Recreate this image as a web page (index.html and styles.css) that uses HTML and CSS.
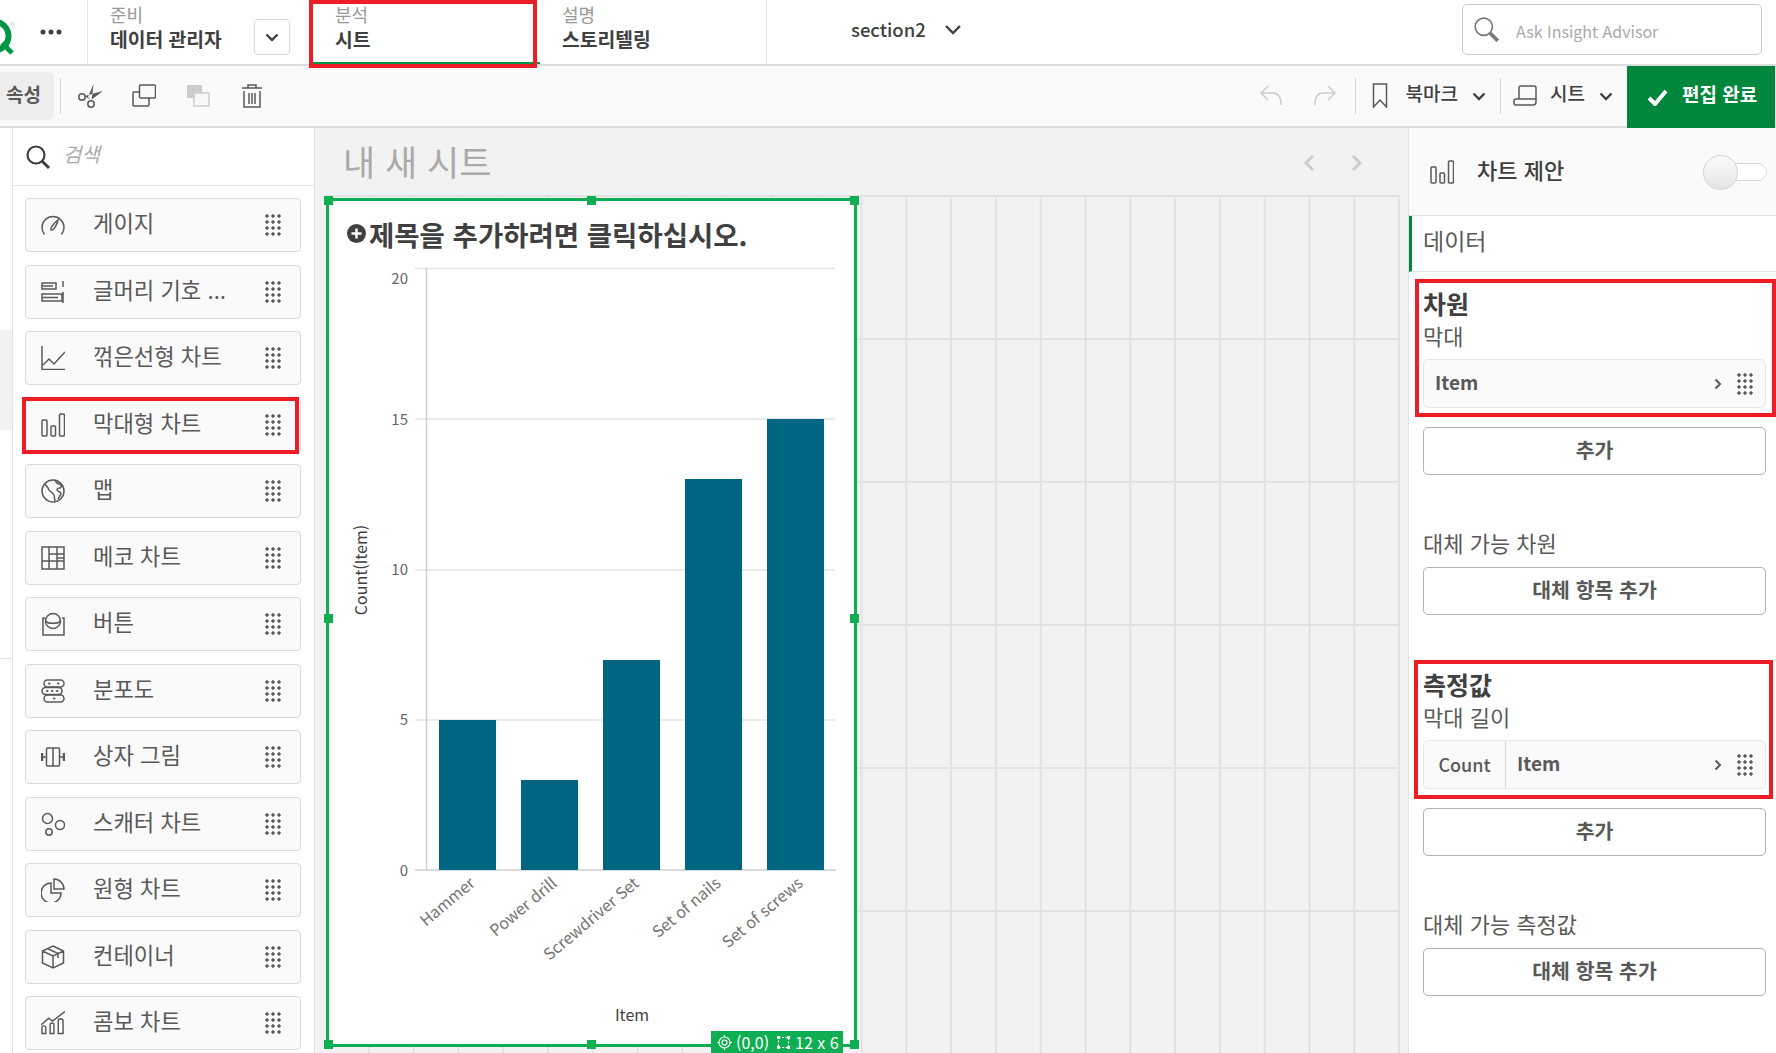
FILE: index.html
```html
<!DOCTYPE html>
<html lang="ko">
<head>
  <meta charset="UTF-8">
  <title>시트 편집</title>
  <link rel="stylesheet" href="styles.css">
</head>
<body>
  <header class="topbar">
    <div class="brand">
      <svg class="logo" width="18" height="50" viewBox="0 0 18 50">
        <circle cx="-6" cy="29" r="14.5" fill="none" stroke="#009845" stroke-width="6"/>
        <path d="M2 36l10 10" stroke="#009845" stroke-width="5" fill="none"/>
        <circle cx="12.500" cy="17" r="1.500" fill="none" stroke="#bbb" stroke-width=".7"/>
      </svg>
      <svg class="more" width="22" height="6" viewBox="0 0 22 6"><circle cx="3" cy="3" r="2.500"/><circle cx="11" cy="3" r="2.500"/><circle cx="19" cy="3" r="2.500"/></svg>
    </div>
    <div class="tab tab-prepare">
      <div><div class="tab-label">준비</div><div class="tab-name">데이터 관리자</div></div>
      <button class="tab-drop"><svg width="14" height="9" viewBox="0 0 14 9"><path d="M1.500 1.500L7 7l5.500-5.500" class="chev"/></svg></button>
    </div>
    <div class="tab tab-analyze">
      <div><div class="tab-label">분석</div><div class="tab-name">시트</div></div>
    </div>
    <div class="tab tab-narrate">
      <div><div class="tab-label">설명</div><div class="tab-name">스토리텔링</div></div>
    </div>
    <div class="section-name">section2 <svg width="18" height="11" viewBox="0 0 18 11"><path d="M2 2l7 7 7-7" class="chev"/></svg></div>
    <div class="insight">
      <svg width="28" height="28" viewBox="0 0 26 26"><circle cx="10" cy="10" r="8" fill="none" stroke="#777" stroke-width="1.500"/><path d="M16 16l7 7" stroke="#777" stroke-width="3.500" fill="none"/></svg>
      <span>Ask Insight Advisor</span>
    </div>
  </header>

  <div class="toolbar">
    <button class="prop-btn">속성</button>
    <span class="tool-div first"></span>
    <div class="tools">
      <svg class="tool" viewBox="0 0 24 24"><circle cx="4" cy="13" r="3.200"/><circle cx="13" cy="20" r="3.200"/><path class="blade" d="M6.500 12L25 7 13 16zM13.500 17L15.500 0 10 13z"/></svg>
      <svg class="tool" viewBox="0 0 24 24"><rect x="7.500" y="1" width="16" height="13" rx="1"/><path d="M7.500 8H2a1 1 0 0 0-1 1v12a1 1 0 0 0 1 1h14a1 1 0 0 0 1-1v-7"/></svg>
      <svg class="tool" viewBox="0 0 24 24"><rect x="1" y="1" width="15" height="13" fill="#ccc" stroke="none"/><rect x="8" y="9" width="15" height="13" fill="#f8f8f8" stroke="#ccc"/></svg>
      <svg class="tool" viewBox="0 0 24 24"><path d="M2 4h20M8 4V1h8v3M4 7v16h16V7M9 9v11M12 9v11M15 9v11"/></svg>
    </div>
    <div class="tools-right">
      <svg class="tool faint" viewBox="0 0 24 24"><path d="M9 2L2 9l7 7M2 9h12c5 0 8 4 8 12"/></svg>
      <svg class="tool faint gap" viewBox="0 0 24 24"><path d="M15 2l7 7-7 7M22 9H10c-5 0-8 4-8 12"/></svg>
      <span class="tool-div"></span>
      <svg class="mark" width="16" height="25" viewBox="0 0 16 25"><path d="M1.500 1h13v23L8 17l-6.500 7z"/></svg>
      <span class="tool-text">북마크</span>
      <svg class="tool-chev" width="14" height="9" viewBox="0 0 14 9"><path d="M1.500 1.500L7 7l5.500-5.500" class="chev"/></svg>
      <span class="tool-div second"></span>
      <svg class="tool sheet-ico" viewBox="0 0 24 24"><path d="M6 16V5a2 2 0 0 1 2-2h13a2 2 0 0 1 2 2v13M3 22a2 2 0 0 1-2-2v-2a2 2 0 0 1 2-2h20v3a3 3 0 0 1-3 3H3z" transform="translate(0 -1)"/></svg>
      <span class="tool-text">시트</span>
      <svg class="tool-chev" width="14" height="9" viewBox="0 0 14 9"><path d="M1.500 1.500L7 7l5.500-5.500" class="chev"/></svg>
    </div>
    <button class="done-btn">
      <svg width="21" height="17" viewBox="0 0 21 17"><path d="M2 9l6 6L19 2" fill="none" stroke="#fff" stroke-width="4"/></svg>
      <span>편집 완료</span>
    </button>
  </div>

  <main class="main">
    <div class="strip"><div class="strip-block"></div><div class="strip-line"></div></div>

    <aside class="assets">
      <div class="asset-search">
        <svg width="26" height="26" viewBox="0 0 26 26"><circle cx="11" cy="11" r="8.500" fill="none" stroke="#404040" stroke-width="2.200"/><path d="M17 17l7 7" stroke="#404040" stroke-width="3" fill="none"/></svg>
        <span>검색</span>
      </div>
      <ul class="asset-list">
        <li class="asset">
          <svg class="ico" viewBox="0 0 24 24"><path d="M3.500 21.500A11 11 0 1 1 20.500 21.500"/><path d="M10 17c-1-2 4-8 7-10-1 4-4 11-7 10z"/></svg>
          <span class="asset-name">게이지</span><span class="grip"></span>
        </li>
        <li class="asset">
          <svg class="ico" viewBox="0 0 24 24"><path d="M1 3h14v6H1zM1 14h20v7H1zM1 6h11M1 17.500h16M22 1v6M22 12v11"/></svg>
          <span class="asset-name">글머리 기호 ...</span><span class="grip"></span>
        </li>
        <li class="asset">
          <svg class="ico" viewBox="0 0 24 24"><path d="M1 0v23.500h24M2 19l6-6 5 5L24 6"/></svg>
          <span class="asset-name">꺾은선형 차트</span><span class="grip"></span>
        </li>
        <li class="asset asset-marked">
          <svg class="ico" viewBox="0 0 24 24"><rect x="1" y="7" width="5" height="16" rx="1"/><rect x="10" y="13" width="4.500" height="10" rx="1"/><rect x="18.500" y="1" width="5" height="22" rx="1"/></svg>
          <span class="asset-name">막대형 차트</span><span class="grip"></span>
        </li>
        <li class="asset">
          <svg class="ico" viewBox="0 0 24 24"><circle cx="12" cy="12" r="11"/><path d="M4 5c2 3 3 3 4 6 1 2 4 2 5 5l1 6M15 1c-1 3 1 3 3 4 3 1 3 3 1 4-2 0-3 0-3 2 1 2 4 1 4 4l-3 5"/></svg>
          <span class="asset-name">맵</span><span class="grip"></span>
        </li>
        <li class="asset">
          <svg class="ico" viewBox="0 0 24 24"><rect x="1" y="1" width="22" height="22"/><path d="M8 1v22M16 1v22M8 8h15M1 15h22M16 12h7"/></svg>
          <span class="asset-name">메코 차트</span><span class="grip"></span>
        </li>
        <li class="asset">
          <svg class="ico" viewBox="0 0 24 24"><path d="M4 6H2v17h21V6h-2"/><circle cx="12" cy="9" r="7.500"/><path d="M4.500 9c2 3 13 3 15 0"/></svg>
          <span class="asset-name">버튼</span><span class="grip"></span>
        </li>
        <li class="asset">
          <svg class="ico" viewBox="0 0 24 24"><rect x="3" y="1" width="20" height="7" rx="3.500"/><rect x="1" y="8.500" width="20" height="7" rx="3.500"/><rect x="3" y="16" width="20" height="7" rx="3.500"/><path class="dotline" d="M8 4.500h.5M17 4.500h.5M6 12h.5M11 12h.5M16 12h.5M13 19.500h.5"/></svg>
          <span class="asset-name">분포도</span><span class="grip"></span>
        </li>
        <li class="asset">
          <svg class="ico" viewBox="0 0 24 24"><rect x="5.500" y="3" width="13" height="18" rx="1"/><path d="M12 3v18M0 12h5.500M18.500 12H24"/><path class="whisker" d="M1 8v8M23 8v8"/></svg>
          <span class="asset-name">상자 그림</span><span class="grip"></span>
        </li>
        <li class="asset">
          <svg class="ico" viewBox="0 0 24 24"><circle cx="6.500" cy="6.500" r="5"/><circle cx="19" cy="13" r="4.500"/><circle cx="8" cy="20" r="3.200"/></svg>
          <span class="asset-name">스캐터 차트</span><span class="grip"></span>
        </li>
        <li class="asset">
          <svg class="ico" viewBox="0 0 24 24"><path d="M10 5A10 10 0 1 0 20 15H10z"/><path d="M13 1a10 10 0 0 1 10 10H13z"/></svg>
          <span class="asset-name">원형 차트</span><span class="grip"></span>
        </li>
        <li class="asset">
          <svg class="ico" viewBox="0 0 24 24"><path d="M12 1l10.500 5v12L12 23 1.500 18V6zM1.500 6L12 11l10.500-5M12 11v12M6.500 3.500L17 8.500V13"/></svg>
          <span class="asset-name">컨테이너</span><span class="grip"></span>
        </li>
        <li class="asset">
          <svg class="ico" viewBox="0 0 25 24"><path d="M1 23v-6a2 2 0 0 1 4 0v6zM9.500 23v-9a2 2 0 0 1 4 0v9zM18 23V10a2.500 2.500 0 0 1 5 0v13zM0 14L8 7l4 3L25 0"/></svg>
          <span class="asset-name">콤보 차트</span><span class="grip"></span>
        </li>
      </ul>
    </aside>

    <section class="canvas">
      <div class="canvas-head">
        <h1 class="sheet-title">내 새 시트</h1>
        <div class="pager">
          <svg width="12" height="18" viewBox="0 0 12 18"><path d="M10 2L3 9l7 7"/></svg>
          <svg width="12" height="18" viewBox="0 0 12 18"><path d="M2 2l7 7-7 7"/></svg>
        </div>
      </div>
      <div class="sheet">
        <div class="card">
          <div class="card-title">
            <svg width="19" height="19" viewBox="0 0 19 19"><circle cx="9.500" cy="9.500" r="9.500" fill="#404040"/><path d="M9.500 4.500v10M4.500 9.500h10" stroke="#fff" stroke-width="2.400"/></svg>
            <span>제목을 추가하려면 클릭하십시오.</span>
          </div>
          <svg class="chart" width="525" height="794" viewBox="329 250 525 794">
            <path class="grid" d="M415 268.500H835M415 419H835M415 570H835M415 720H835"/>
            <path class="axis" d="M426.500 268V870M415 870H836"/>
            <text class="tick" x="408" y="284">20</text>
            <text class="tick" x="408" y="425">15</text>
            <text class="tick" x="408" y="575">10</text>
            <text class="tick" x="408" y="725">5</text>
            <text class="tick" x="408" y="876">0</text>
            <rect class="bar" x="439" y="720" width="57" height="150"/>
            <rect class="bar" x="521" y="780" width="57" height="90"/>
            <rect class="bar" x="603" y="660" width="57" height="210"/>
            <rect class="bar" x="685" y="479" width="57" height="391"/>
            <rect class="bar" x="767" y="419" width="57" height="451"/>
            <text class="cat" transform="translate(476 885) rotate(-40)">Hammer</text>
            <text class="cat" transform="translate(558 885) rotate(-40)">Power drill</text>
            <text class="cat" transform="translate(640 885) rotate(-40)">Screwdriver Set</text>
            <text class="cat" transform="translate(722 885) rotate(-40)">Set of nails</text>
            <text class="cat" transform="translate(804 885) rotate(-40)">Set of screws</text>
            <text class="axis-title" transform="translate(367 570) rotate(-90)">Count(Item)</text>
            <text class="axis-title" x="632" y="1021">Item</text>
          </svg>
          <span class="handle h-tl"></span><span class="handle h-tc"></span><span class="handle h-tr"></span>
          <span class="handle h-ml"></span><span class="handle h-mr"></span>
          <span class="handle h-bl"></span><span class="handle h-bc"></span><span class="handle h-br"></span>
          <div class="badge">
            <svg width="15" height="15" viewBox="0 0 15 15"><circle cx="7.500" cy="7.500" r="5.500"/><circle cx="7.500" cy="7.500" r="2.500"/><path d="M7.500 0v2M7.500 13v2M0 7.500h2M13 7.500h2"/></svg>
            <span>(0,0)</span>
            <svg class="badge-size" width="15" height="15" viewBox="0 0 15 15"><path d="M2.500 2.500h10v10h-10z" stroke-dasharray="2 1.500"/><path class="corners" d="M1 1h3v3H1zM11 1h3v3h-3zM1 11h3v3H1zM11 11h3v3h-3z"/></svg>
            <span>12 x 6</span>
          </div>
        </div>
      </div>
    </section>

    <aside class="props">
      <div class="suggest">
        <svg class="ico" viewBox="0 0 24 24"><rect x="1" y="7" width="5" height="16" rx="1"/><rect x="10" y="13" width="4.500" height="10" rx="1"/><rect x="18.500" y="1" width="5" height="22" rx="1"/></svg>
        <span class="suggest-text">차트 제안</span>
        <span class="toggle"><span class="knob"></span></span>
      </div>
      <div class="data-tab">데이터</div>

      <div class="prop-section first">
        <div class="marked marked-dim">
          <div class="prop-title">차원</div>
          <div class="prop-sub">막대</div>
          <div class="field">
            <span class="field-name">Item</span>
            <svg class="field-chev" width="8" height="12" viewBox="0 0 8 12"><path d="M1.500 1.500L6 6l-4.500 4.500" class="chev"/></svg>
            <span class="grip"></span>
          </div>
        </div>
        <button class="add-btn">추가</button>
        <div class="prop-sub alt">대체 가능 차원</div>
        <button class="add-btn flush">대체 항목 추가</button>
      </div>

      <div class="prop-section">
        <div class="marked">
          <div class="prop-title">측정값</div>
          <div class="prop-sub">막대 길이</div>
          <div class="field">
            <span class="field-agg">Count</span>
            <span class="field-name">Item</span>
            <svg class="field-chev" width="8" height="12" viewBox="0 0 8 12"><path d="M1.500 1.500L6 6l-4.500 4.500" class="chev"/></svg>
            <span class="grip"></span>
          </div>
        </div>
        <button class="add-btn">추가</button>
        <div class="prop-sub alt">대체 가능 측정값</div>
        <button class="add-btn flush">대체 항목 추가</button>
      </div>
    </aside>
  </main>
</body>
</html>
```

FILE: styles.css
```css
*, *::after {
  box-sizing: border-box;
}
html, body {
  margin: 0;
  height: 100%;
}
body {
  width: 1776px;
  height: 1053px;
  overflow: hidden;
  display: flex;
  flex-direction: column;
  background: #fff;
  color: #595959;
  font-family: "Noto Sans CJK KR", "Noto Sans", sans-serif;
}
button {
  font-family: inherit;
  background: none;
  cursor: pointer;
}
svg {
  flex: none;
  display: block;
}
.chev {
  fill: none;
  stroke: #404040;
  stroke-width: 2.4;
}

/* top bar */
.topbar {
  height: 66px;
  flex: none;
  display: flex;
  border-bottom: 2px solid #dcdcdc;
  background: #fff;
}
.brand {
  width: 88px;
  flex: none;
  display: flex;
  align-items: center;
  border-right: 1px solid #e3e3e3;
}
.more {
  margin-left: 22px;
  fill: #404040;
}
.tab {
  display: flex;
  align-items: center;
  flex: none;
  padding-bottom: 12px;
}
.tab-label {
  font-size: 18px;
  line-height: 24px;
  color: #999;
  padding-bottom: 2px;
}
.tab-name {
  font-size: 19.3px;
  line-height: 22px;
  font-weight: 700;
  color: #404040;
}
.tab-prepare {
  width: 221px;
  padding-left: 22px;
}
.tab-drop {
  width: 36px;
  height: 36px;
  margin-left: auto;
  margin-right: 19px;
  margin-top: 22px;
  border: 1px solid #d9d9d9;
  border-radius: 4px;
  display: flex;
  align-items: center;
  justify-content: center;
  padding: 0;
}
.tab-analyze {
  width: 231px;
  padding-left: 26px;
  position: relative;
  border-bottom: 2px solid #009845;
  padding-bottom: 10px;
}
.tab-analyze::after {
  content: "";
  position: absolute;
  left: 0;
  top: 0;
  width: 228px;
  height: 68px;
  border: 4.5px solid #ee1c25;
}
.tab-narrate {
  width: 227px;
  padding-left: 22px;
  border-right: 1px solid #e3e3e3;
}
.section-name {
  margin-left: 84px;
  display: flex;
  align-items: center;
  gap: 18px;
  font-size: 18.5px;
  font-weight: 500;
  color: #404040;
  padding-bottom: 6px;
}
.insight {
  margin-left: auto;
  margin-right: 14px;
  margin-top: 4px;
  width: 300px;
  height: 51px;
  border: 1px solid #ccc;
  border-radius: 5px;
  display: flex;
  align-items: center;
  padding-left: 10px;
  gap: 15px;
  font-size: 16px;
  color: #aaa;
}
.insight span {
  padding-top: 2px;
}

/* toolbar */
.toolbar {
  height: 62px;
  flex: none;
  display: flex;
  align-items: center;
  background: #fafafa;
  border-bottom: 2px solid #dcdcdc;
  padding-right: 1px;
}
.prop-btn {
  width: 54px;
  height: 48px;
  border: 0;
  border-radius: 0 5px 5px 0;
  background: #ededed;
  font-size: 19px;
  font-weight: 700;
  color: #595959;
  padding: 0 0 6px 6px;
  text-align: left;
}
.tool-div {
  width: 1px;
  height: 36px;
  background: #d4d4d4;
  flex: none;
}
.tool-div.first {
  margin-left: 6px;
}
.tools {
  display: flex;
  gap: 30px;
  margin-left: 17px;
}
.tool {
  width: 24px;
  height: 24px;
  fill: none;
  stroke: #595959;
  stroke-width: 1.5;
}
.tool .blade {
  fill: #595959;
  stroke: none;
}
.tool.faint {
  stroke: #ccc;
}
.tool.faint.gap {
  margin-left: 30px;
  margin-right: 18px;
}
.tools-right {
  margin-left: auto;
  display: flex;
  align-items: center;
}
.mark {
  margin-left: 16px;
  margin-bottom: 2px;
  fill: none;
  stroke: #595959;
  stroke-width: 1.5;
}
.tool-text {
  margin-left: 18px;
  font-size: 19px;
  font-weight: 500;
  color: #404040;
  padding-bottom: 7px;
}
.tool-chev {
  margin-left: 14px;
}
.tool-div.second {
  margin-left: 14px;
}
.sheet-ico {
  margin-left: 12px;
}
.sheet-ico + .tool-text {
  margin-left: 13px;
}
.tools-right > .tool-chev:last-child {
  margin-right: 14px;
}
.done-btn {
  width: 148px;
  height: 62px;
  border: 0;
  background: #00873d;
  color: #fff;
  font-size: 19px;
  font-weight: 700;
  display: flex;
  align-items: center;
  gap: 14px;
  padding: 0 0 0 20px;
  align-self: flex-start;
}
.done-btn span {
  padding-bottom: 8px;
}

/* main row */
.main {
  flex: 1;
  display: flex;
  min-height: 0;
  overflow: hidden;
}
.strip {
  width: 12px;
  flex: none;
  background: #fff;
  padding-top: 202px;
}
.strip-block {
  height: 100px;
  background: #f2f2f2;
}
.strip-line {
  height: 1px;
  background: #e3e3e3;
  margin-top: 228px;
}

/* chart list */
.assets {
  width: 303px;
  flex: none;
  border-left: 1px solid #e3e3e3;
  border-right: 1px solid #e3e3e3;
  background: #fff;
}
.asset-search {
  height: 58px;
  border-bottom: 1px solid #e3e3e3;
  display: flex;
  align-items: center;
  padding-left: 12px;
  gap: 12px;
  font-size: 20px;
  font-style: italic;
  color: #aaa;
}
.asset-search span {
  padding-bottom: 6px;
}
.asset-list {
  list-style: none;
  margin: 12px 0 0 12px;
  padding: 0;
  width: 276px;
  display: flex;
  flex-direction: column;
  gap: 12.5px;
}
.asset {
  height: 54px;
  flex: none;
  display: flex;
  align-items: center;
  background: #fafafa;
  border: 1px solid #d9d9d9;
  border-radius: 4px;
  padding-left: 15px;
  position: relative;
}
.ico {
  width: 24px;
  height: 24px;
  fill: none;
  stroke: #595959;
  stroke-width: 1.5;
}
.dotline {
  stroke-width: 2;
  stroke-linecap: round;
}
.whisker {
  stroke-width: 2.5;
}
.asset-name {
  margin-left: 28px;
  font-size: 22.2px;
  color: #595959;
  padding-bottom: 6px;
}
.grip {
  width: 18px;
  height: 24px;
  margin-left: auto;
  flex: none;
  background-image: radial-gradient(circle at center, #595959 1.4px, transparent 1.9px);
  background-size: 6px 6px;
}
.asset .grip {
  margin-right: 18px;
}
.asset-marked::after {
  content: "";
  position: absolute;
  left: -4px;
  top: -2px;
  right: 1px;
  bottom: -3px;
  border: 4.5px solid #ee1c25;
}

/* sheet */
.canvas {
  flex: 1;
  min-width: 0;
  display: flex;
  flex-direction: column;
  padding-left: 8px;
  padding-right: 8px;
  background: #f2f2f2;
}
.canvas-head {
  height: 65px;
  flex: none;
  display: flex;
  align-items: center;
  padding-left: 20px;
}
.sheet-title {
  margin: 0;
  font-size: 35px;
  font-weight: 400;
  color: #aaa;
}
.pager {
  margin-left: auto;
  margin-right: 37px;
  margin-top: 4px;
  display: flex;
  gap: 36px;
}
.pager path {
  fill: none;
  stroke: #ccc;
  stroke-width: 3;
}
.sheet {
  flex: 1;
  min-height: 0;
  border-top: 2px solid #f2f2f2;
  border-left: 2px solid #f2f2f2;
  background-color: #f2f2f2;
  background-clip: padding-box;
  background-image: linear-gradient(to right, #e2e2e2 2px, transparent 2px), linear-gradient(to bottom, #e2e2e2 2px, transparent 2px);
  background-size: 44.8px 100%, 100% 143px;
  background-position: 42.8px 0, 0 143px;
}
.card {
  position: relative;
  width: 531px;
  height: 849px;
  margin: 3px 0 0 1px;
  background: #fff;
  border: 3px solid #0fae52;
}
.card-title {
  display: flex;
  align-items: center;
  gap: 3px;
  height: 49px;
  padding: 15px 0 0 18px;
  font-size: 27.5px;
  font-weight: 700;
  color: #404040;
  line-height: 34px;
}
.card-title span {
  padding-top: 2px;
}
.chart text {
  font-family: "Noto Sans CJK KR", "Noto Sans", sans-serif;
}
.grid {
  fill: none;
  stroke: #e3e3e3;
  stroke-width: 1.5;
}
.axis {
  fill: none;
  stroke: #cfcfcf;
  stroke-width: 1.5;
}
.bar {
  fill: #006580;
}
.tick {
  font-size: 15px;
  fill: #666;
  text-anchor: end;
}
.cat {
  font-size: 16px;
  fill: #737373;
  text-anchor: end;
}
.axis-title {
  font-size: 16px;
  fill: #404040;
  text-anchor: middle;
}
.handle {
  position: absolute;
  width: 9px;
  height: 9px;
  background: #0fae52;
}
.h-tl { left: -5px; top: -5px; }
.h-tc { left: 258px; top: -5px; }
.h-tr { right: -5px; top: -5px; }
.h-ml { left: -5px; top: 413px; }
.h-mr { right: -5px; top: 413px; }
.h-bl { left: -5px; bottom: -5px; }
.h-bc { left: 258px; bottom: -5px; }
.h-br { right: -5px; bottom: -5px; }
.badge {
  position: absolute;
  right: 11px;
  bottom: -9px;
  height: 22px;
  width: 132px;
  background: #0fae52;
  color: #fff;
  font-size: 16px;
  line-height: 22px;
  display: flex;
  align-items: center;
  padding-left: 6px;
  gap: 4px;
}
.badge svg {
  fill: none;
  stroke: #fff;
  stroke-width: 1.2;
}
.badge-size {
  margin-left: 3px;
}
.badge .corners {
  fill: #fff;
  stroke: none;
}

/* properties */
.props {
  width: 368px;
  flex: none;
  border-left: 1px solid #e3e3e3;
  background: #fff;
}
.suggest {
  height: 88px;
  background: #fafafa;
  border-bottom: 1px solid #e3e3e3;
  display: flex;
  align-items: center;
  padding-left: 21px;
  position: relative;
}
.suggest-text {
  margin-left: 23px;
  font-size: 22px;
  font-weight: 500;
  color: #404040;
  padding-bottom: 6px;
}
.toggle {
  position: relative;
  width: 60px;
  height: 18px;
  margin-left: auto;
  margin-right: 9px;
  margin-top: 1px;
  background: #fff;
  border: 1px solid #d9d9d9;
  border-radius: 9px;
}
.knob {
  position: absolute;
  left: -5px;
  top: -9px;
  width: 35px;
  height: 35px;
  border-radius: 50%;
  background: linear-gradient(#fbfbfb, #e4e4e4);
  border: 1px solid #d4d4d4;
}
.data-tab {
  height: 56px;
  border-left: 3px solid #00873d;
  border-bottom: 1px solid #e3e3e3;
  background: #fff;
  font-size: 23px;
  line-height: 48px;
  padding-left: 11px;
  color: #595959;
}
.prop-section {
  padding: 0 10px 53px 14px;
}
.prop-section.first {
  padding-top: 15px;
}
.marked {
  position: relative;
  margin-bottom: 19px;
}
.marked::after {
  content: "";
  position: absolute;
  left: -9px;
  right: -7px;
  top: -8px;
  bottom: -10px;
  border: 4.5px solid #ee1c25;
}
.marked-dim::after {
  left: -8px;
  right: -10px;
  bottom: -9px;
}
.prop-title {
  font-size: 25px;
  font-weight: 700;
  line-height: 32px;
  color: #404040;
}
.prop-sub {
  font-size: 22px;
  line-height: 30px;
  margin-top: 1px;
  color: #595959;
}
.prop-sub.alt {
  margin-top: 0;
  padding-top: 52px;
  height: 83px;
}
.field {
  height: 49px;
  margin-top: 9px;
  display: flex;
  align-items: center;
  background: #fafafa;
  border: 1px solid #e6e6e6;
  border-radius: 5px;
  font-size: 19px;
  font-weight: 700;
  color: #595959;
}
.field-agg {
  width: 82px;
  height: 100%;
  flex: none;
  border-right: 1px solid #d9d9d9;
  text-align: center;
  line-height: 46px;
  font-size: 18px;
  font-weight: 500;
}
.field-name {
  padding-left: 11px;
  padding-bottom: 4px;
}
.field-chev {
  margin-left: auto;
  margin-right: 14px;
}
.field-chev path {
  stroke: #595959;
  stroke-width: 2;
}
.field .grip {
  margin-left: 0;
  margin-right: 11px;
}
.add-btn {
  display: block;
  width: 100%;
  height: 48px;
  border: 1px solid #b3b3b3;
  border-radius: 5px;
  background: #fff;
  font-size: 20.5px;
  font-weight: 700;
  color: #595959;
  padding: 0 0 5px;
}
.add-btn.flush {
  margin-top: 9px;
}
```
